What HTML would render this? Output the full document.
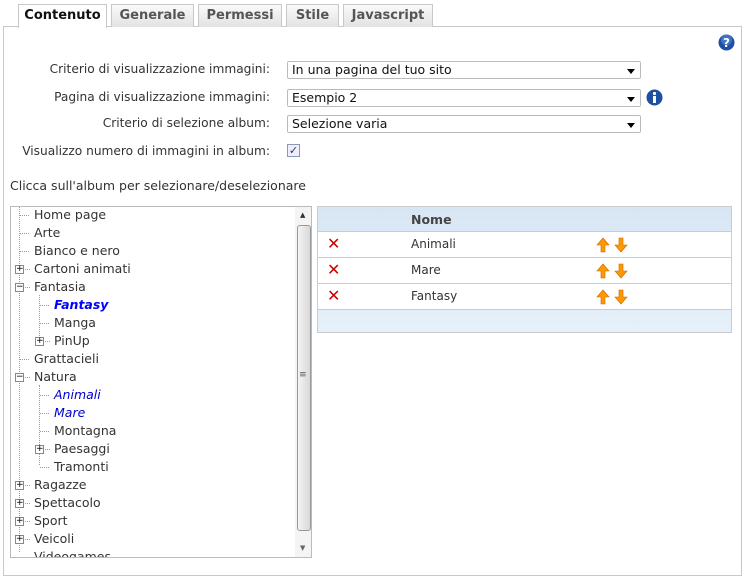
<!DOCTYPE html>
<html><head><style>
*{box-sizing:border-box}
body{margin:0;width:744px;height:578px;background:#fff;font-family:"DejaVu Sans","Liberation Sans",sans-serif;font-size:12px;color:#333;position:relative;overflow:hidden}
.a{position:absolute}
.tab{position:absolute;top:4px;height:23px;border:1px solid #c8c8c8;border-bottom:none;background:linear-gradient(#fafafa,#e2e2e2);font-weight:bold;font-size:13px;color:#555;text-align:center;line-height:21px}
.panel{position:absolute;left:3px;top:26px;width:739px;height:550px;border:1px solid #c8c8c8}
.lbl{position:absolute;right:474px;white-space:nowrap;font-size:12.2px}
.sel{position:absolute;left:287px;width:354px;height:18px;border:1px solid #bbb;border-radius:2px;font-size:12.5px;padding-left:4px;line-height:16px;color:#111}
.sel:after{content:"";position:absolute;right:5px;top:7px;border:4px solid transparent;border-top:5px solid #000;border-bottom:none}
.tree{position:absolute;left:10px;top:206px;width:302px;height:352px;border:1px solid #bbb;overflow:hidden}
.r{position:absolute;height:18px;line-height:18px;white-space:nowrap;font-size:12.5px}
.pm{position:absolute;width:9px;height:9px;border:1px solid #888;background:#fff;font-size:9px;line-height:7px;text-align:center;color:#000}
.vl{position:absolute;border-left:1px dotted #999}
.hl{position:absolute;border-top:1px dotted #999;width:9px}
.tbl{position:absolute;left:317px;top:206px;width:415px;height:127px;border:1px solid #ccc}
.row{position:absolute;left:0;width:413px;height:26px;border-top:1px solid #ccc;background:#fff}
.x{position:absolute;left:9px;top:5px;color:#c00;font-size:16px;line-height:14px}
.ar{position:absolute;left:278px;top:5px}
</style></head><body>
<div class="panel"></div>
<div class="tab" style="left:18px;width:89px;background:#fff;color:#111;height:24px">Contenuto</div>
<div class="tab" style="left:111px;width:83px">Generale</div>
<div class="tab" style="left:198px;width:84px">Permessi</div>
<div class="tab" style="left:286px;width:53px">Stile</div>
<div class="tab" style="left:343px;width:90px">Javascript</div>

<svg class="a" style="left:718px;top:34px" width="17" height="17"><circle cx="8.5" cy="8.5" r="8" fill="#1f4fa0"/><circle cx="8.5" cy="6" r="5.5" fill="#5a8ad6" opacity=".6"/><text x="8.5" y="13" font-size="12" font-weight="bold" fill="#fff" text-anchor="middle" font-family="DejaVu Sans">?</text></svg>

<div class="lbl" style="top:62px">Criterio di visualizzazione immagini:</div>
<div class="sel" style="top:61px">In una pagina del tuo sito</div>
<div class="lbl" style="top:90px">Pagina di visualizzazione immagini:</div>
<div class="sel" style="top:89px">Esempio 2</div>
<svg class="a" style="left:646px;top:89px" width="17" height="17"><circle cx="8.5" cy="8.5" r="8" fill="#1f4fa0"/><rect x="7" y="7" width="3" height="7" fill="#fff"/><circle cx="8.5" cy="4.5" r="1.6" fill="#fff"/></svg>
<div class="lbl" style="top:116px">Criterio di selezione album:</div>
<div class="sel" style="top:115px">Selezione varia</div>
<div class="lbl" style="top:144px">Visualizzo numero di immagini in album:</div>
<div class="a" style="left:287px;top:144px;width:13px;height:13px;border:1px solid #8a9ab0;background:#eef;font-size:11px;line-height:11px;text-align:center;color:#335">✓</div>

<div class="a" style="left:10px;top:178px;font-size:12.5px">Clicca sull'album per selezionare/deselezionare</div>

<div class="tree">
<div class="vl" style="left:8px;top:0;height:345px"></div>
<div class="vl" style="left:28px;top:88px;height:45px"></div>
<div class="vl" style="left:28px;top:178px;height:80px"></div>
<div class="hl" style="left:9px;top:8px"></div><div class="r" style="left:23px;top:-1px">Home page</div>
<div class="hl" style="left:9px;top:26px"></div><div class="r" style="left:23px;top:17px">Arte</div>
<div class="hl" style="left:9px;top:44px"></div><div class="r" style="left:23px;top:35px">Bianco e nero</div>
<div class="pm" style="left:4px;top:58px">+</div><div class="hl" style="left:14px;top:62px;width:5px"></div><div class="r" style="left:23px;top:53px">Cartoni animati</div>
<div class="pm" style="left:4px;top:76px">−</div><div class="hl" style="left:14px;top:80px;width:5px"></div><div class="r" style="left:23px;top:71px">Fantasia</div>
<div class="hl" style="left:29px;top:98px"></div><div class="r" style="left:43px;top:89px;color:#00f;font-weight:bold;font-style:italic">Fantasy</div>
<div class="hl" style="left:29px;top:116px"></div><div class="r" style="left:43px;top:107px">Manga</div>
<div class="pm" style="left:24px;top:130px">+</div><div class="hl" style="left:34px;top:134px;width:5px"></div><div class="r" style="left:43px;top:125px">PinUp</div>
<div class="hl" style="left:9px;top:152px"></div><div class="r" style="left:23px;top:143px">Grattacieli</div>
<div class="pm" style="left:4px;top:166px">−</div><div class="hl" style="left:14px;top:170px;width:5px"></div><div class="r" style="left:23px;top:161px">Natura</div>
<div class="hl" style="left:29px;top:188px"></div><div class="r" style="left:43px;top:179px;color:#00c;font-style:italic">Animali</div>
<div class="hl" style="left:29px;top:206px"></div><div class="r" style="left:43px;top:197px;color:#00c;font-style:italic">Mare</div>
<div class="hl" style="left:29px;top:224px"></div><div class="r" style="left:43px;top:215px">Montagna</div>
<div class="pm" style="left:24px;top:238px">+</div><div class="hl" style="left:34px;top:242px;width:5px"></div><div class="r" style="left:43px;top:233px">Paesaggi</div>
<div class="hl" style="left:29px;top:260px"></div><div class="r" style="left:43px;top:251px">Tramonti</div>
<div class="pm" style="left:4px;top:274px">+</div><div class="hl" style="left:14px;top:278px;width:5px"></div><div class="r" style="left:23px;top:269px">Ragazze</div>
<div class="pm" style="left:4px;top:292px">+</div><div class="hl" style="left:14px;top:296px;width:5px"></div><div class="r" style="left:23px;top:287px">Spettacolo</div>
<div class="pm" style="left:4px;top:310px">+</div><div class="hl" style="left:14px;top:314px;width:5px"></div><div class="r" style="left:23px;top:305px">Sport</div>
<div class="pm" style="left:4px;top:328px">+</div><div class="hl" style="left:14px;top:332px;width:5px"></div><div class="r" style="left:23px;top:323px">Veicoli</div>
<div class="hl" style="left:9px;top:350px"></div><div class="r" style="left:23px;top:341px">Videogames</div>
<div class="a" style="left:284px;top:0;width:16px;height:350px;background:#f4f4f4"></div>
<div class="a" style="left:286px;top:18px;width:14px;height:306px;border:1px solid #999;border-radius:3px;background:linear-gradient(90deg,#f4f4f4,#d8d8d8)"></div>
<div class="a" style="left:289px;top:4px;font-size:7px;color:#333">▲</div>
<div class="a" style="left:289px;top:337px;font-size:7px;color:#666">▼</div>
<div class="a" style="left:288px;top:163px;font-size:9px;color:#555">≡</div>
</div>

<div class="tbl" style="background:linear-gradient(#d8e6f4,#e6f0f9)">
<div class="a" style="left:93px;top:5px;font-weight:bold;color:#444;font-size:12.5px">Nome</div>
<div class="row" style="top:24px"><span class="x">✕</span><span class="a" style="left:93px;top:5px">Animali</span><svg class="ar" width="34" height="16"><path d="M7 1L1 8h4v7h4V8h4z" fill="#f90" stroke="#c60" stroke-width=".6"/><path d="M25 15l6-7h-4V1h-4v7h-4z" fill="#f90" stroke="#c60" stroke-width=".6"/></svg></div>
<div class="row" style="top:50px"><span class="x">✕</span><span class="a" style="left:93px;top:5px">Mare</span><svg class="ar" width="34" height="16"><path d="M7 1L1 8h4v7h4V8h4z" fill="#f90" stroke="#c60" stroke-width=".6"/><path d="M25 15l6-7h-4V1h-4v7h-4z" fill="#f90" stroke="#c60" stroke-width=".6"/></svg></div>
<div class="row" style="top:76px"><span class="x">✕</span><span class="a" style="left:93px;top:5px">Fantasy</span><svg class="ar" width="34" height="16"><path d="M7 1L1 8h4v7h4V8h4z" fill="#f90" stroke="#c60" stroke-width=".6"/><path d="M25 15l6-7h-4V1h-4v7h-4z" fill="#f90" stroke="#c60" stroke-width=".6"/></svg></div>
<div class="a" style="left:0;top:102px;width:413px;border-top:1px solid #ccc"></div>
</div>
</body></html>
